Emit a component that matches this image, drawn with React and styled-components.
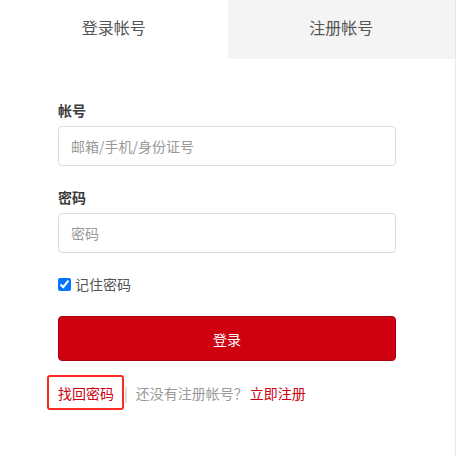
import React from "react";
import styled, { createGlobalStyle } from "styled-components";

const Global = createGlobalStyle`
  html, body { margin: 0; padding: 0; background: #fff; }
  body { font-family: "Noto Sans CJK SC", "Noto Sans", sans-serif; }
  * { box-sizing: border-box; }
`;

const Panel = styled.div`
  width: 456px;
  height: 456px;
  border-right: 1px solid #e3e9f1;
  background: #fff;
`;

const Tabs = styled.div`
  display: flex;
  height: 59px;
`;

const Tab = styled.div`
  flex: 1;
  display: flex;
  align-items: center;
  justify-content: center;
  font-size: 16px;
  color: #555;
  background: ${(p) => (p.$active ? "#fff" : "#f4f4f4")};
  padding-bottom: 6px;
`;

const Form = styled.form`
  display: flex;
  flex-direction: column;
  padding: 41px 59px 0 58px;
`;

const Label = styled.div`
  font-size: 14px;
  line-height: 20px;
  font-weight: bold;
  color: #3a3a3a;
  margin-bottom: 6px;
`;

const Input = styled.input`
  height: 40px;
  width: 100%;
  border: 1px solid #dcdcdc;
  border-radius: 4px;
  padding: 0 12px;
  font-family: inherit;
  font-size: 14px;
  color: #333;
  outline: none;
  margin-bottom: ${(p) => p.$mb}px;
  &::placeholder { color: #999; }
`;

const Remember = styled.label`
  display: flex;
  align-items: center;
  height: 20px;
  font-size: 14px;
  color: #555;
  margin-bottom: 22px;
  input {
    width: 13px;
    height: 13px;
    margin: 0 4px 0 0;
  }
`;

const Button = styled.button`
  height: 45px;
  width: 100%;
  background: #cf0010;
  border: 1px solid #a9000d;
  border-radius: 4px;
  color: #fff;
  font-family: inherit;
  font-size: 14px;
  margin-bottom: 22px;
  padding: 0;
`;

const Bottom = styled.div`
  display: flex;
  align-items: center;
  height: 20px;
  font-size: 14px;
  color: #999;
  white-space: nowrap;
`;

const RedLink = styled.a`
  color: #cc0011;
  text-decoration: none;
  position: relative;
`;

const Marked = styled(RedLink)`
  &::after {
    content: "";
    position: absolute;
    left: -11px;
    right: -10px;
    top: -8px;
    bottom: -7px;
    border: 2px solid #ff2a1f;
    border-radius: 3px;
  }
`;

const Sep = styled.span`
  color: #bbb;
  margin: 0 8px 0 10px;
`;

const Hint = styled.span`
  margin-right: 2px;
`;

export default function App() {
  return (
    <>
      <Global />
      <Panel>
        <Tabs>
          <Tab $active>登录帐号</Tab>
          <Tab>注册帐号</Tab>
        </Tabs>
        <Form onSubmit={(e) => e.preventDefault()}>
          <Label>帐号</Label>
          <Input placeholder="邮箱/手机/身份证号" $mb={21} />
          <Label>密码</Label>
          <Input type="password" placeholder="密码" $mb={21} />
          <Remember>
            <input type="checkbox" defaultChecked />
            记住密码
          </Remember>
          <Button type="submit">登录</Button>
          <Bottom>
            <Marked href="#">找回密码</Marked>
            <Sep>|</Sep>
            <Hint>还没有注册帐号？</Hint>
            <RedLink href="#">立即注册</RedLink>
          </Bottom>
        </Form>
      </Panel>
    </>
  );
}
